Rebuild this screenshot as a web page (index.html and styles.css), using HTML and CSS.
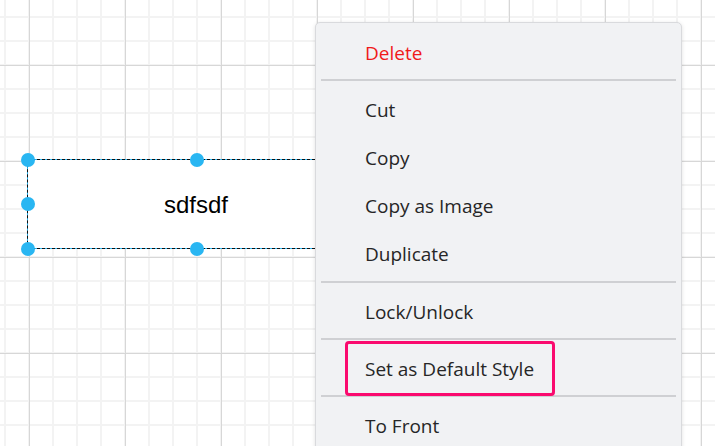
FILE: index.html
```html
<!DOCTYPE html>
<html>
<head>
<meta charset="utf-8">
<link rel="stylesheet" href="styles.css">
</head>
<body>
<div class="canvas">
  <div class="shape">
    <span class="shape-label">sdfsdf</span>
    <span class="handle h-tl"></span>
    <span class="handle h-tm"></span>
    <span class="handle h-ml"></span>
    <span class="handle h-bl"></span>
    <span class="handle h-bm"></span>
  </div>
  <ul class="menu">
    <li class="item danger">Delete</li>
    <li class="sep"></li>
    <li class="item">Cut</li>
    <li class="item">Copy</li>
    <li class="item">Copy as Image</li>
    <li class="item">Duplicate</li>
    <li class="sep sep-wide"></li>
    <li class="item">Lock/Unlock</li>
    <li class="sep"></li>
    <li class="item highlighted">Set as Default Style</li>
    <li class="sep"></li>
    <li class="item">To Front</li>
  </ul>
</div>
</body>
</html>
```
FILE: styles.css
```css
html, body {
  margin: 0;
  padding: 0;
  width: 715px;
  height: 446px;
  overflow: hidden;
}
body {
  background-color: #ffffff;
  background-image:
    linear-gradient(to right, #d7d7d7 1px, transparent 1px),
    linear-gradient(to bottom, #d7d7d7 1px, transparent 1px),
    linear-gradient(to right, #f3f3f3 2px, transparent 2px),
    linear-gradient(to bottom, #f3f3f3 2px, transparent 2px);
  background-size: 96px 96px, 96px 96px, 24px 24px, 24px 24px;
  background-position: 29px 0, 0 65px, 4px 0, 0 16px;
}
.canvas {
  position: relative;
  width: 715px;
  height: 446px;
}
.shape {
  position: absolute;
  left: 27px;
  top: 159px;
  width: 338px;
  height: 90px;
  box-sizing: border-box;
  background: #ffffff;
  border: 1px solid #29b6f2;
  outline: 1px dashed #111;
  outline-offset: -1px;
  display: flex;
  align-items: center;
  justify-content: center;
}
.shape-label {
  font-family: "Liberation Sans", Arial, sans-serif;
  font-size: 24px;
  color: #000;
  margin-top: 2px;
}
.handle {
  position: absolute;
  width: 14px;
  height: 14px;
  border-radius: 50%;
  background: #29b6f2;
  transform: translate(-50%, -50%);
}
.h-tl { left: 0; top: 0; }
.h-tm { left: 169px; top: 0; }
.h-ml { left: 0; top: 44px; }
.h-bl { left: 0; top: 89px; }
.h-bm { left: 169px; top: 89px; }

.menu {
  position: absolute;
  left: 315px;
  top: 22px;
  width: 367px;
  margin: 0;
  padding: 6px 5px 40px;
  box-sizing: border-box;
  list-style: none;
  background: #f1f2f4;
  border: 1px solid #d9dadd;
  border-radius: 5px;
  box-shadow: 0 1px 4px rgba(0, 0, 0, 0.12);
  font-family: "Open Sans", "Noto Sans", sans-serif;
  font-size: 19px;
  color: #262626;
}
.item {
  position: relative;
  height: 48px;
  line-height: 48px;
  padding-left: 44px;
  white-space: nowrap;
}
.danger {
  color: #f01a1a;
}
.sep {
  height: 2px;
  background: #cfd0d3;
  margin: 2px 0 5px;
}
.sep-wide {
  margin: 3px 0 5px;
}
.highlighted::after {
  content: "";
  position: absolute;
  left: 24px;
  top: -4px;
  width: 210px;
  height: 55px;
  box-sizing: border-box;
  border: 3px solid #fa0a6e;
  border-radius: 4px;
}
```
